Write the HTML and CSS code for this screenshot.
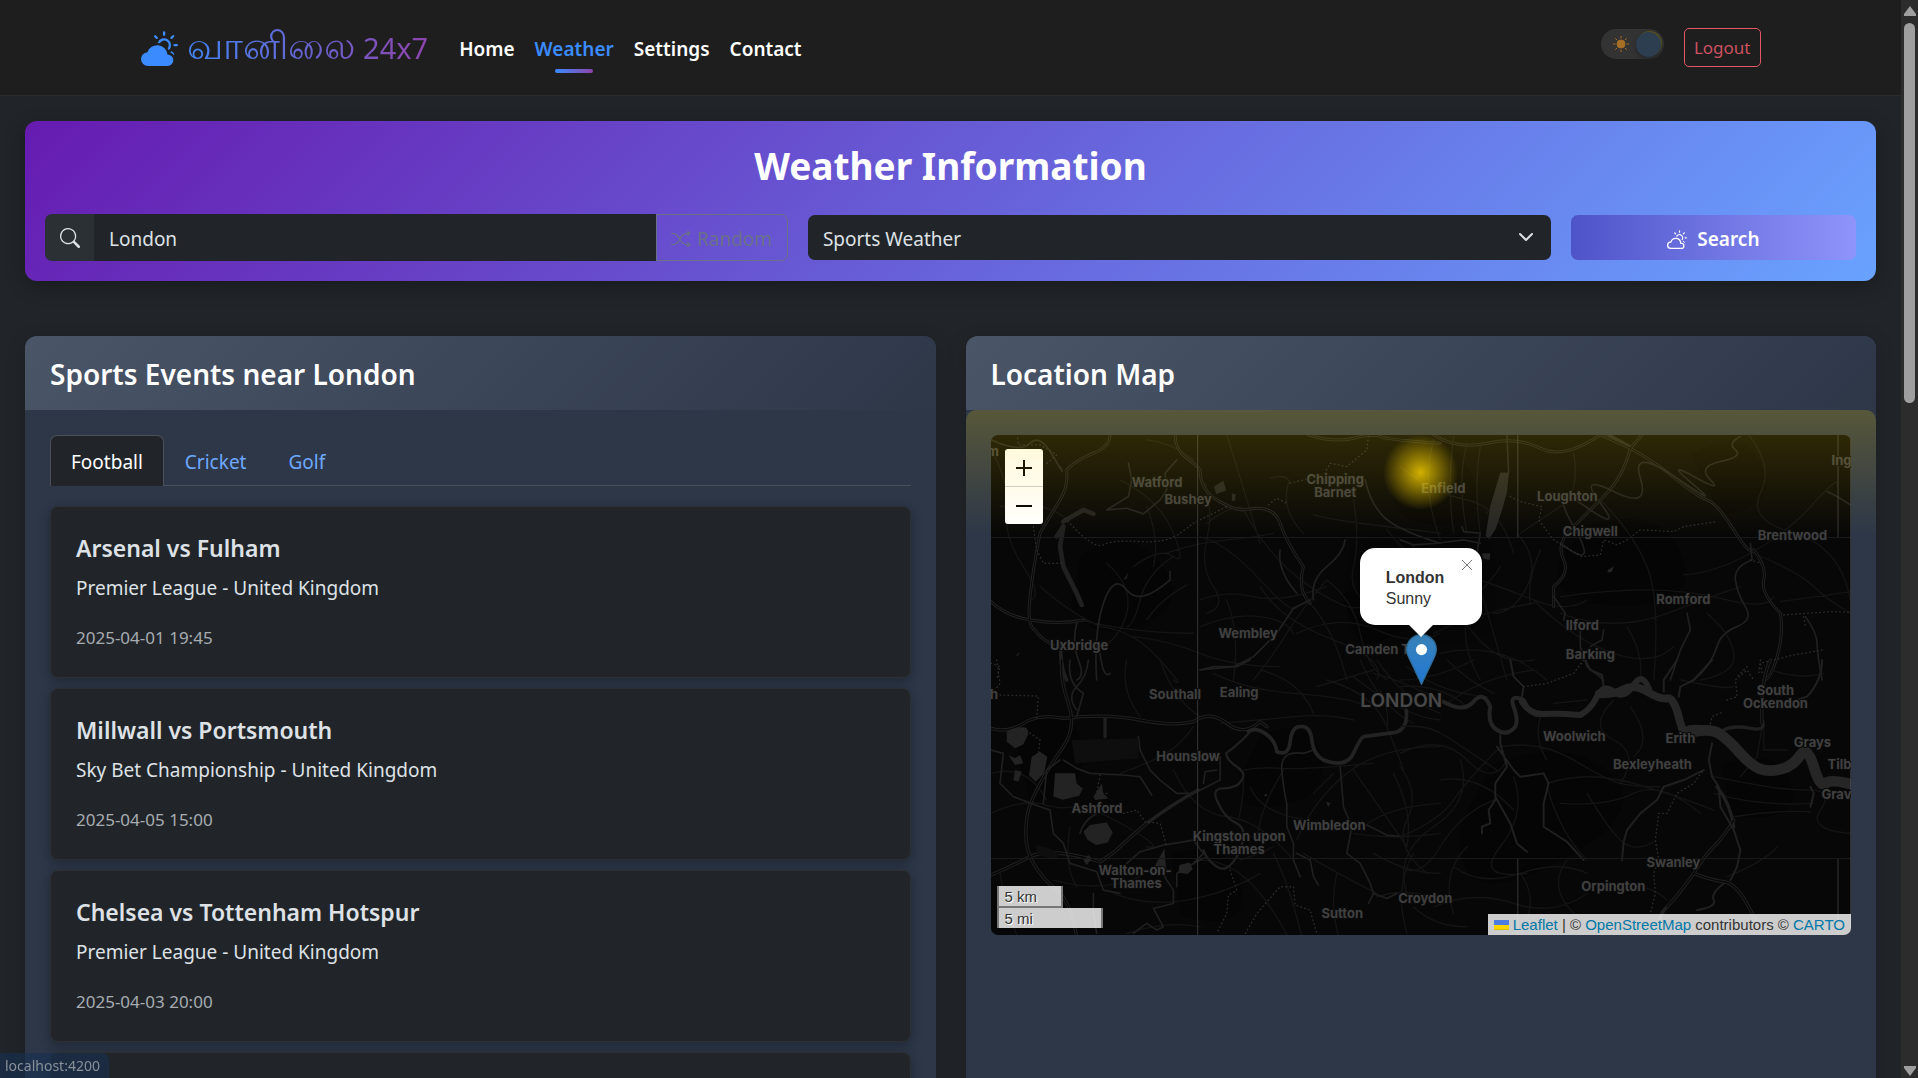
FILE: index.html
```html
<!DOCTYPE html>
<html lang="en">
<head>
<meta charset="utf-8">
<meta name="viewport" content="width=device-width, initial-scale=1">
<title>வானிலை 24x7</title>
<link rel="stylesheet" href="styles.css">
</head>
<body>
<header class="navbar">
  <div class="navbar-inner">
    <a class="brand" href="#">
      <svg class="brand-icon" viewBox="0 0 16 16" aria-hidden="true"><path d="M11.473 11a4.5 4.5 0 0 0-8.72-.99A3 3 0 0 0 3 16h8.5a2.5 2.5 0 0 0 0-5z"/><path d="M10.5 1.5a.5.5 0 0 0-1 0v1a.5.5 0 0 0 1 0zm3.743 1.964a.5.5 0 1 0-.707-.707l-.708.707a.5.5 0 0 0 .708.708zm-7.779-.707a.5.5 0 0 0-.707.707l.707.708a.5.5 0 1 0 .708-.708zm1.734 3.374a2 2 0 1 1 3.296 2.198q.3.423.516.898a3 3 0 1 0-4.84-3.225q.529.017 1.028.129m4.484 4.074c.6.215 1.125.59 1.522 1.072a.5.5 0 0 0 .039-.742l-.707-.707a.5.5 0 0 0-.854.377M14.5 6.5a.5.5 0 0 0 0 1h1a.5.5 0 0 0 0-1z"/></svg>
      <span class="brand-name"><span class="tamil" lang="ta">வானிலை</span> 24x7</span>
    </a>
    <nav class="nav">
      <a class="nav-link" href="#">Home</a>
      <a class="nav-link active" href="#">Weather</a>
      <a class="nav-link" href="#">Settings</a>
      <a class="nav-link" href="#">Contact</a>
    </nav>
    <div class="nav-actions">
      <label class="theme-toggle">
        <input class="visually-hidden" type="checkbox" checked aria-label="Dark theme">
        <svg class="sun" viewBox="0 0 16 16" aria-hidden="true"><circle cx="8" cy="8" r="4"/><path d="M8 0v2.500M8 13.500V16M0 8h2.500M13.500 8H16M2.300 2.300l1.800 1.800M11.900 11.900l1.800 1.800M13.700 2.300l-1.800 1.800M4.100 11.900l-1.800 1.800"/></svg>
        <span class="knob"></span>
      </label>
      <button class="logout" type="button">Logout</button>
    </div>
  </div>
</header>

<main class="page">
  <section class="banner">
    <h1 class="banner-title">Weather Information</h1>
    <form class="search-form">
      <div class="search-group">
        <label class="search-addon" for="city" aria-label="City">
          <svg class="icon" viewBox="0 0 16 16" aria-hidden="true"><path d="M11.742 10.344a6.5 6.5 0 1 0-1.397 1.398h-.001q.044.06.098.115l3.85 3.85a1 1 0 0 0 1.415-1.414l-3.85-3.85a1 1 0 0 0-.115-.1zM12 6.500a5.500 5.500 0 1 1-11 0 5.500 5.500 0 0 1 11 0"/></svg>
        </label>
        <input class="search-input" id="city" type="text" value="London">
        <button class="random" type="button" disabled>
          <svg class="icon" viewBox="0 0 16 16" aria-hidden="true"><path fill-rule="evenodd" d="M0 3.500A.5.5 0 0 1 .5 3H1c2.202 0 3.827 1.240 4.874 2.418.49.552.865 1.102 1.126 1.532.26-.43.636-.98 1.126-1.532C9.173 4.240 10.798 3 13 3v1c-1.798 0-3.173 1.010-4.126 2.082A9.600 9.600 0 0 0 7.556 8a9.600 9.600 0 0 0 1.317 1.918C9.828 10.990 11.204 12 13 12v1c-2.202 0-3.827-1.240-4.874-2.418A10.600 10.600 0 0 1 7 9.050c-.26.43-.636.98-1.126 1.532C4.827 11.760 3.202 13 1 13H.5a.5.5 0 0 1 0-1H1c1.798 0 3.173-1.010 4.126-2.082A9.600 9.600 0 0 0 6.444 8a9.600 9.600 0 0 0-1.317-1.918C4.172 5.010 2.796 4 1 4H.5a.5.5 0 0 1-.5-.5"/><path d="M13 5.466V1.534a.25.25 0 0 1 .41-.192l2.360 1.966c.12.1.12.284 0 .384l-2.360 1.966a.25.25 0 0 1-.41-.192m0 9v-3.932a.25.25 0 0 1 .41-.192l2.360 1.966c.12.1.12.284 0 .384l-2.360 1.966a.25.25 0 0 1-.41-.192"/></svg>
          Random
        </button>
      </div>
      <div class="select-wrap">
        <select class="select" aria-label="Weather type"><option>Sports Weather</option><option>Current Weather</option></select>
        <svg class="chevron" viewBox="0 0 16 16" aria-hidden="true"><path d="m2 5 6 6 6-6"/></svg>
      </div>
      <button class="search-button" type="submit">
        <svg class="icon" viewBox="0 0 16 16" aria-hidden="true"><path d="M7 8a3.500 3.500 0 0 1 3.500 3.555.5.5 0 0 0 .624.492A1.503 1.503 0 0 1 13 13.500a1.500 1.500 0 0 1-1.500 1.500H3a2 2 0 1 1 .1-3.998.5.5 0 0 0 .51-.375A3.500 3.500 0 0 1 7 8m4.473 3a4.500 4.500 0 0 0-8.720-.99A3 3 0 0 0 3 16h8.500a2.500 2.500 0 0 0 0-5z"/><path d="M10.5 1.5a.5.5 0 0 0-1 0v1a.5.5 0 0 0 1 0zm3.743 1.964a.5.5 0 1 0-.707-.707l-.708.707a.5.5 0 0 0 .708.708zm-7.779-.707a.5.5 0 0 0-.707.707l.707.708a.5.5 0 1 0 .708-.708zm1.734 3.374a2 2 0 1 1 3.296 2.198q.3.423.516.898a3 3 0 1 0-4.840-3.225q.529.017 1.028.129m4.484 4.074c.6.215 1.125.59 1.522 1.072a.5.5 0 0 0 .039-.742l-.707-.707a.5.5 0 0 0-.854.377M14.5 6.5a.5.5 0 0 0 0 1h1a.5.5 0 0 0 0-1z"/></svg>
        Search
      </button>
    </form>
  </section>

  <div class="columns">
    <section class="card">
      <h2 class="card-header">Sports Events near London</h2>
      <div class="card-body">
        <div class="tabs" role="tablist">
          <button class="tab selected" type="button" role="tab" aria-selected="true">Football</button>
          <button class="tab" type="button" role="tab" aria-selected="false">Cricket</button>
          <button class="tab" type="button" role="tab" aria-selected="false">Golf</button>
        </div>
        <div class="events">
          <article class="event"><h3 class="event-title">Arsenal vs Fulham</h3><p class="event-league">Premier League - United Kingdom</p><p class="event-date">2025-04-01 19:45</p></article>
          <article class="event"><h3 class="event-title">Millwall vs Portsmouth</h3><p class="event-league">Sky Bet Championship - United Kingdom</p><p class="event-date">2025-04-05 15:00</p></article>
          <article class="event"><h3 class="event-title">Chelsea vs Tottenham Hotspur</h3><p class="event-league">Premier League - United Kingdom</p><p class="event-date">2025-04-03 20:00</p></article>
          <article class="event"></article>
        </div>
      </div>
    </section>

    <section class="card">
      <h2 class="card-header">Location Map</h2>
      <div class="card-body">
        <div class="map">
          <svg class="tiles" viewBox="0 0 860 500" preserveAspectRatio="xMidYMid slice" role="img" aria-label="Map of London">
            <rect width="860" height="500" fill="#070707"/>
            <!-- parks and open land -->
            <g fill="#030303" opacity=".4">
              <path d="M90 120q50-30 80 10t-20 60-70-20zM420 10q40-20 60 30t-30 50-50-40zM600 90q70-20 90 30t-60 50-60-50zM270 300q50-20 60 20t-40 50-40-30zM500 330q80-30 120 10t-60 90-90-40zM20 290q60-30 70 20t-50 60zM700 20q50-30 70 10t-40 50zM180 420q60-20 70 30t-60 30zM730 330q60-20 70 20t-60 30zM350 160q40-20 60 10t-40 40z"/>
            </g>
            <!-- north-west -->
            <g transform="translate(-31 -35) scale(.3333)" fill="none" stroke-linecap="round" stroke-linejoin="round">
              <g stroke="#141414" stroke-width="4">
                <path d="M93 150Q150 250 140 330T190 500 210 600M480 240Q600 300 640 400T640 470 520 500M440 490Q520 560 500 640T400 760M560 120Q640 130 700 180M800 105Q870 330 900 430M735 250Q760 340 740 420T760 560 740 640M640 470Q560 520 540 600T500 680M620 460Q700 430 800 420T940 400M720 410Q800 430 900 540T1010 620M850 330Q930 480 1050 560T1200 620M985 250Q960 330 1030 400M1180 300Q1200 420 1180 500T1240 620M1060 345Q1120 360 1200 370T1440 400M1100 540Q1030 620 980 700T880 840M720 600Q800 570 880 590T1100 560M520 710Q620 720 720 760T960 800M420 680Q520 690 600 780T640 840M930 235Q980 220 990 250M720 680Q820 640 900 650T1000 700M1100 540Q1180 600 1200 700T1280 840M1040 600Q1120 680 1160 840M740 370Q820 310 850 325M360 660Q520 700 700 700M560 660Q600 600 680 555M1010 700Q1140 640 1250 690T1440 700M900 560Q960 660 1120 720T1250 840M1280 390Q1350 480 1360 440M800 600Q840 700 820 840M580 500Q600 420 560 320M240 560Q330 640 420 680M120 320Q240 300 310 350"/>
              </g>
              <g stroke="#222" stroke-width="9">
                <path d="M450 105Q450 140 400 160T320 210Q325 260 300 300T240 400Q220 500 210 590T225 690Q240 715 280 735"/>
                <path d="M645 105Q645 150 680 175T720 210Q720 270 770 300T850 330Q940 310 960 370T1030 500Q1010 570 1050 610"/>
                <path d="M1045 105Q1120 130 1180 115T1260 110T1440 130"/>
                <path d="M93 605Q140 650 220 662T370 660"/>
              </g>
              <g stroke="#070707" stroke-width="3">
                <path d="M450 105Q450 140 400 160T320 210Q325 260 300 300T240 400Q220 500 210 590T225 690Q240 715 280 735M645 105Q645 150 680 175T720 210Q720 270 770 300T850 330Q940 310 960 370T1030 500Q1010 570 1050 610M1045 105Q1120 130 1180 115T1260 110T1440 130M93 605Q140 650 220 662T370 660"/>
              </g>
              <g stroke="#202020" stroke-width="5">
                <path d="M93 120Q180 160 210 130T280 170 300 200M505 190L515 240 505 290 440 330 500 325 550 342 600 300 620 270 615 220 650 180M350 670Q335 730 355 780T350 840M420 760Q430 840 450 820M410 840Q400 700 430 610T500 570 630 540L630 515M720 810L820 800 880 770 950 700 1000 625 1050 600M1155 420Q1150 460 1100 500T1060 600M960 450Q950 510 1010 580M1215 240Q1230 310 1270 350T1440 430"/>
                <path d="M305 730Q295 790 320 840" stroke-width="11"/>
                <path d="M310 365L370 330 400 342M290 410L310 380 300 440 310 500 350 580 365 615" stroke-width="14"/>
              </g>
              <g stroke="#2c2c2c" stroke-width="4" stroke-dasharray="2 10">
                <path d="M173 115L175 135 240 135 290 165 255 195M220 380L230 450 250 490 310 490M315 355Q400 450 430 435T540 425 660 400 700 370 800 320M925 315L950 295 980 310M990 250L1090 225 1110 190 1160 200 1220 150 1225 105M93 790L120 800 110 840"/>
              </g>
              <path fill="#222" d="M762 260l28-18 8 30-30 10zM815 280l12 4-2 18-10 2zM490 540l14-22-4 18zM165 768l15-12-4 10z"/>
            </g>
            <!-- north-east -->
            <g transform="translate(409 -35) scale(.3333)" fill="none" stroke-linecap="round" stroke-linejoin="round">
              <g stroke="#141414" stroke-width="4">
                <path d="M100 120Q60 260 120 420M160 110Q140 260 160 400M200 130Q170 240 200 400M240 140Q220 260 240 400M520 160Q540 280 480 320T360 400M0 200Q100 280 200 300T340 460M350 400Q420 480 380 560T280 640M180 520Q300 560 400 600T560 600M480 590Q620 570 740 570T980 600 1120 590M600 300Q700 400 740 500T760 840M480 640Q640 700 800 640T1020 560M850 525Q940 520 1050 460T1240 310 1310 260M1045 105Q1120 200 1080 280T1180 400 1350 600M1060 460Q1200 520 1240 560T1350 640M1140 605L1350 575M400 600Q520 720 640 760T820 740M130 450Q220 500 250 600T320 840M20 560Q140 600 220 700T400 780M100 700Q220 640 400 610M920 640Q990 700 1000 760T900 840M680 680Q730 760 720 840M200 640Q180 740 240 840M420 450Q380 540 390 610M300 500Q240 600 120 640M0 480Q120 490 220 560M120 760Q300 720 440 840"/>
              </g>
              <g stroke="#222" stroke-width="9">
                <path d="M100 105Q170 150 260 130T420 145T600 105L690 145Q670 230 610 290T500 400Q470 440 490 480T460 560V620"/>
                <path d="M725 105L690 145Q770 190 830 240T920 300 1000 390 1060 450Q1100 500 1090 540T1140 640Q1150 700 1130 770T1090 840"/>
                <path d="M625 105L690 140"/>
              </g>
              <g stroke="#070707" stroke-width="3">
                <path d="M100 105Q170 150 260 130T420 145T600 105L690 145Q670 230 610 290T500 400Q470 440 490 480T460 560V620M725 105L690 145Q770 190 830 240T920 300 1000 390 1060 450Q1100 500 1090 540T1140 640Q1150 700 1130 770T1090 840"/>
              </g>
              <g stroke="#202020" stroke-width="5">
                <path d="M1020 110Q980 130 1005 150T960 185 930 240 880 230 880 255 830 235 720 235 640 275 600 310 555 320 520 380 480 430M320 105L325 220 300 250M0 420L40 435 110 430 190 420 240 430M185 380L190 395 240 400 230 460M1050 430L1055 480Q1000 500 1005 540T1035 620 1010 680 950 740Q930 800 880 840M860 640L870 690 840 750 810 840M1280 275L1310 290 1350 315M1215 650Q1250 700 1250 730T1265 840M460 590L495 640 490 660M540 690L540 740 560 800 610 840M610 690L605 720 570 740"/>
              </g>
              <path fill="#252525" stroke="none" d="M300 218h26l-6 60-14 50-20 60-20 30-10-10 14-90zM245 460l25 0-2 20-20-4zM622 510l18-10-6 16-12 2zM256 330l6 12-4-2z"/>
              <g stroke="#2c2c2c" stroke-width="4" stroke-dasharray="2 10">
                <path d="M330 290L360 305 425 320 415 360 460 420 545 470 600 465 610 420 650 435 680 420 720 390 820 395 850 380 950 365M1050 480L1080 490M1150 645L1290 635 1350 637M1210 650L1215 680M1265 750L1180 765 1120 780 1080 790 1085 820M1040 800L1010 830"/>
              </g>
            </g>
            <!-- south-west -->
            <g transform="translate(-31 225) scale(.3333)" fill="none" stroke-linecap="round" stroke-linejoin="round">
              <g stroke="#141414" stroke-width="4">
                <path d="M500 0Q480 90 540 170M600 0Q640 120 720 170M760 40Q860 90 1000 100T1200 130M900 30Q1020 60 1060 160M1100 60Q1240 100 1280 200T1330 330M1070 80L1240 30M1200 0Q1260 140 1360 190M780 190Q900 180 1000 170T1180 180M720 600Q820 600 900 700T1010 900M850 330Q900 320 960 325T1240 310M850 360Q850 420 835 480M890 540Q900 440 970 330M1010 540Q1060 420 1160 340T1440 260M1180 330L1340 560M1210 500Q1280 440 1440 430M1240 580Q1340 640 1440 640M1180 520Q1300 540 1440 520M1030 580Q1130 640 1250 700M700 200Q660 260 600 290T480 340M940 580Q1000 700 1040 900M640 330Q700 460 800 470T1000 600M840 600Q900 580 940 560M460 700Q560 740 680 720T900 640M500 820Q620 780 720 800M240 430Q300 450 340 440T500 500 560 560M280 660Q420 700 540 650M330 500Q310 620 350 680M93 340Q200 310 260 420M120 640Q140 760 200 900M1360 580Q1300 680 1340 820M1250 710Q1340 680 1440 720M1130 640Q1100 760 1160 900M1300 340Q1360 460 1340 560M1060 400L1120 340M1240 40Q1320 60 1440 120M1250 0Q1330 120 1440 160M1180 50Q1330 170 1440 180M1260 90Q1290 160 1280 200M870 380Q900 460 1040 480M93 460Q180 420 240 430"/>
              </g>
              <g stroke="#202020" stroke-width="10">
                <path d="M93 205Q140 220 190 190T310 175Q440 160 540 180T700 185Q750 150 800 190T900 185L920 200M305 0Q300 60 325 130T310 260Q260 330 230 390T200 480Q190 560 220 610T290 690 350 830M93 645Q150 620 210 590T420 605Q460 580 480 560T560 490M435 170V230M560 490Q640 430 715 390"/>
              </g>
              <g stroke="#070707" stroke-width="4">
                <path d="M93 205Q140 220 190 190T310 175Q440 160 540 180T700 185Q750 150 800 190T900 185L920 200M305 0Q300 60 325 130T310 260Q260 330 230 390T200 480Q190 560 220 610T290 690 350 830M93 645Q150 620 210 590T420 605Q460 580 480 560T560 490"/>
              </g>
              <g stroke="#1f1f1f" stroke-width="5">
                <path d="M385 0Q380 50 350 80T350 150M330 0Q320 70 370 100L350 170M310 300L350 325 390 340 490 345 540 350 575 405M535 230L540 270 570 330 600 360 650 400 700 400 780 360 780 290M93 270L130 280 120 370 160 410 240 440 270 450 280 520 310 550 330 610 410 635 430 690 480 700M250 430L260 330 300 300M730 370L735 335 770 330M500 610L540 575 610 555 700 540 730 580 700 610M600 620L620 660 640 690 640 730 580 745 610 800 590 810 560 790 520 820M360 520Q370 480 410 460M720 30L760 20 830 20 870 0M650 680V640L700 610 740 590M980 430Q970 390 965 330T1030 280L1060 270M980 430L980 500 1000 550 1000 600 1020 650M1010 580L1050 600 1060 650 1075 675M1140 320L1150 440 1175 500 1160 580 1200 610 1230 670 1240 700 1225 730M1240 700L1280 715 1310 700M1220 495L1280 525 1330 530M400 700L400 760 410 820"/>
                <path stroke-width="7" d="M798 280Q800 300 830 320T845 360Q830 385 790 385T775 430Q790 470 830 490T830 590Q800 640 770 620T730 570M798 280Q850 240 865 220"/>
                <path stroke="#232323" stroke-width="11" d="M865 215Q885 200 915 220T950 275Q985 290 990 245T1020 200Q1050 195 1055 240T1090 300Q1160 325 1180 280T1210 230L1300 218Q1345 210 1338 150"/>
              </g>
              <g fill="#232323">
                <path d="M140 215q25-18 60-12l5 20-15 30-25 12-25-20zM215 290l25-15 22 15-10 50-25 25-20-20zM285 340h60l5 30 18 15-10 22-50 12-28-10zM370 515l20-20 50-8 18 30-15 30-35 8-25-15zM583 620l30-55 5 60-30 5zM658 615l30-8 10 20-15 15-28-4zM145 285l20 10 15-10 10 25-25 5zM165 330l20 5-10 30-15-5zM400 410l25-40 5 30 15 15-40 5zM370 600l15-15 10 10-15 20zM910 405l12-4-4 10zM1098 425l14 4-8 12z"/>
                <path d="M335 240l200-5v60l-190 15zM230 555l40 10 30 20-20 15-50-20z" fill="#0e0e0e"/>
              </g>
              <g stroke="#2c2c2c" stroke-width="4" stroke-dasharray="2 10">
                <path d="M110 0L120 70 105 90M120 105L235 108 230 175M190 205L240 240 235 280M420 345L410 400 450 400M490 460L530 450 555 485 600 490 620 560M810 630L830 690 805 705 800 760 770 820M850 830L890 760 960 680H1000L1005 735 1050 750 1070 820"/>
              </g>
            </g>
            <!-- south-east -->
            <g transform="translate(409 225) scale(.3333)" fill="none" stroke-linecap="round" stroke-linejoin="round">
              <g stroke="#141414" stroke-width="4">
                <path d="M0 60Q100 60 220 0M0 80Q120 70 200 140M140 130Q250 50 400 30M20 20Q120 100 260 110M280 100Q200 60 140 0M0 280Q120 220 200 300T320 300M0 200Q80 190 140 230T290 330M0 320Q60 400 20 480T80 640M0 530Q120 480 160 420T300 260M180 300Q220 420 100 500T20 700M280 420Q180 460 120 560T0 620M340 350Q380 460 300 560T380 640M300 260Q420 240 520 300T660 370 780 380M440 370Q560 330 700 370T940 450M480 430Q620 440 700 400T900 460M440 380Q480 520 560 600M560 400Q620 500 660 540T760 545M640 120Q560 200 640 240T660 370M690 140Q760 240 700 290M420 170Q400 240 440 300M460 130L560 120M500 600Q440 680 520 760M160 620Q240 680 360 640T560 640M100 740Q220 690 340 730T560 700M360 640Q420 720 360 820M200 560Q120 640 160 760M940 350Q1040 370 1100 380T1230 390 1260 450 1350 520M1000 470Q1120 450 1230 455M940 400Q1080 440 1240 430M1085 200L1070 290 1020 350M1090 200L1090 270H1160M840 60Q980 90 1000 80M1110 30Q1200 60 1270 40M800 720Q760 680 700 680M980 650Q1100 600 1130 560M120 360Q240 340 340 450M40 740Q100 800 200 800"/>
              </g>
              <g stroke="#202020" stroke-width="10">
                <path d="M1110 0Q1080 60 1085 190M970 210Q1000 195 1050 205T1085 180M1000 480Q970 530 940 560T880 640Q830 710 800 740T780 800M880 640Q930 660 970 665T1050 750 1100 820M950 380Q990 430 1000 500"/>
              </g>
              <g stroke="#070707" stroke-width="4">
                <path d="M1110 0Q1080 60 1085 190M1000 480Q970 530 940 560T880 640Q830 710 800 740M880 640Q930 660 970 665T1050 750 1100 820"/>
              </g>
              <g stroke="#202020" stroke-width="6">
                <path d="M300 225L300 250 320 320 285 370 285 420 265 450 270 490 245 500V520M290 260L340 330 360 350 430 340 445 370 430 430 430 500 500 545 550 600M285 410L330 490 350 550 380 575M330 0L340 50 370 80 365 110M555 0L570 30 605 45 612 95M790 95L790 60 830 0M835 110L840 80 880 60 935 0M935 250L925 300 935 350 955 380 960 440 1000 510 1020 570 1010 620 990 660M910 330L850 360 790 380 770 420 720 460 680 510 670 545 665 600M970 670Q930 700 940 720T890 750M1265 0Q1265 60 1220 110L1130 140M1230 380L1240 400 1230 440"/>
              </g>
              <path stroke="#242424" stroke-width="12" d="M130 125Q190 160 220 125T270 140Q260 190 290 210T345 200Q355 180 340 140T370 120Q390 160 410 165"/>
              <path stroke="#262626" stroke-width="18" d="M365 125Q390 165 430 162T540 165Q570 150 590 110T640 95 700 75 750 100"/>
              <path stroke="#262626" stroke-width="24" d="M595 102Q640 105 670 88T740 95 800 115 835 170 855 215 930 210"/>
              <path stroke="#262626" stroke-width="32" d="M880 215Q930 205 955 220T1020 280 1090 330 1150 325 1200 285 1240 320 1275 370 1360 375"/>
              <g stroke="#2c2c2c" stroke-width="4" stroke-dasharray="2 10">
                <path d="M370 80L440 70 520 40 550 0M930 190L935 170 970 155M980 120L1010 110 1005 60 1040 30 1060 60M1080 0L1075 40M905 335L880 370 830 400 800 460H775L765 540 775 600 760 640 765 700 750 760"/>
              </g>
            </g>
            <!-- tile seams -->
            <path d="M206.500 0V500M526.500 0V102M526.500 423V500M846.500 0V102M846.500 423V500" stroke="#353535" fill="none"/>
            <path d="M0 102.500H860M0 423.500H860" stroke="#191919" fill="none"/>
            <path d="M859.500 0V500" stroke="#5c5c5c" fill="none"/>
            <g class="places">
              <text x="166" y="52">Watford</text><text x="197" y="69">Bushey</text><text x="344" y="49">Chipping</text><text x="344" y="62">Barnet</text>
              <text x="452" y="58">Enfield</text><text x="576" y="66">Loughton</text><text x="599" y="101">Chigwell</text><text x="801" y="105">Brentwood</text>
              <text x="840" y="30" class="from">Ing</text><text x="692" y="169">Romford</text><text x="591" y="195">Ilford</text><text x="599" y="224">Barking</text>
              <text x="257" y="203">Wembley</text><text x="88" y="215">Uxbridge</text><text x="354" y="219" class="from">Camden T</text><text x="2" y="21">m</text><text x="3" y="264">h</text>
              <text x="184" y="264">Southall</text><text x="248" y="262">Ealing</text><text x="410" y="272" class="city">LONDON</text><text x="197" y="326">Hounslow</text>
              <text x="106" y="378">Ashford</text><text x="248" y="406">Kingston upon</text><text x="248" y="419">Thames</text><text x="338" y="395">Wimbledon</text>
              <text x="144" y="440">Walton-on-</text><text x="145" y="453">Thames</text><text x="351" y="483">Sutton</text><text x="434" y="468">Croydon</text>
              <text x="583" y="306">Woolwich</text><text x="689" y="308">Erith</text><text x="661" y="334">Bexleyheath</text><text x="784" y="260">South</text><text x="784" y="273">Ockendon</text>
              <text x="821" y="312">Grays</text><text x="836" y="334" class="from">Tilb</text><text x="830" y="364" class="from">Grav</text><text x="682" y="432">Swanley</text><text x="622" y="456">Orpington</text>
            </g>
          </svg>

          <svg class="marker" viewBox="0 0 25 41" aria-hidden="true">
            <defs><linearGradient id="pin" x2="0" y2="1"><stop stop-color="#3a82b8"/><stop offset="1" stop-color="#2077d4"/></linearGradient></defs>
            <path d="M12.500.5C5.900.5.5 5.700.5 12.400c0 3 1.100 5.300 2.100 7.300L12.500 40.500l9.900-20.800c1-2 2.100-4.300 2.100-7.300C24.500 5.700 19.100.5 12.500.5z" fill="url(#pin)" stroke="#2e6c97"/>
            <circle cx="12.500" cy="12.500" r="4.500" fill="#fff"/>
          </svg>
          <div class="popup">
            <strong>London</strong><span>Sunny</span>
            <button class="popup-close" type="button" aria-label="Close popup"><svg viewBox="0 0 10 10" aria-hidden="true"><path d="m0 0 10 10M10 0 0 10"/></svg></button>
          </div>

          <div class="zoom-control">
            <button class="zoom-button" type="button" aria-label="Zoom in"><svg viewBox="0 0 16 16" aria-hidden="true"><path d="M0 8h16M8 0v16"/></svg></button>
            <button class="zoom-button" type="button" aria-label="Zoom out"><svg viewBox="0 0 16 16" aria-hidden="true"><path d="M0 8h16"/></svg></button>
          </div>
          <div class="scale">
            <div class="scale-line km">5 km</div>
            <div class="scale-line mi">5 mi</div>
          </div>
          <div class="attribution"><a href="#"><svg class="flag" viewBox="0 0 15 10" aria-hidden="true"><path fill="#4c7be1" d="M0 0h15v5H0z"/><path fill="#ffd500" d="M0 5h15v4H0z"/><path fill="#e0bc00" d="M0 9h15v1H0z"/></svg> Leaflet</a> | © <a href="#">OpenStreetMap</a> contributors © <a href="#">CARTO</a></div>
        </div>
        <div class="sunny-overlay"><span class="sun-glow"></span></div>
      </div>
    </section>
  </div>
</main>

<div class="status">localhost:4200</div>
<div class="scrollbar" aria-hidden="true">
  <svg class="arrow" viewBox="0 0 12 10"><path d="M6 0 12 8v2H0V8z"/></svg>
  <div class="thumb"></div>
  <svg class="arrow down" viewBox="0 0 12 10"><path d="M6 10 12 2V0H0v2z"/></svg>
</div>
</body>
</html>
```
FILE: styles.css
```css
* { box-sizing: border-box; }

body {
  margin: 0;
  height: 100vh;
  padding-right: 17px;
  overflow: hidden;
  background: #212529;
  color: #dee2e6;
  font: 19px/30px "Noto Sans", "Open Sans", sans-serif;
}

h1, h2, h3, p { margin: 0; }
a { text-decoration: none; }
button, input, select { font: inherit; color: inherit; }
button { cursor: pointer; }

.visually-hidden { position: absolute; opacity: 0; width: 1px; height: 1px; margin: 0; }
.icon { width: 20px; height: 20px; fill: currentColor; flex: none; }

/* Top bar */
.navbar { background: #1e1e1e; border-bottom: 1px solid #2b2b2b; }
.navbar-inner { display: flex; align-items: center; max-width: 1650px; height: 95px; margin: 0 auto; padding: 0 15px; }
.brand { display: flex; align-items: center; gap: 9px; margin-right: 21px; }
.brand-icon { width: 37px; height: 37px; fill: #3b8bff; }
.brand-name {
  font-size: 29px;
  line-height: 45px;
  white-space: nowrap;
  color: transparent;
  background: linear-gradient(90deg, #4285f4, #8e44ad);
  background-clip: text;
  -webkit-background-clip: text;
}
.tamil { font-size: 38px; line-height: 30px; font-weight: 500; }
.nav { display: flex; }
.nav-link { position: relative; padding: 11px 10px 9px; color: #fff; font-weight: 600; }
.nav-link.active { color: #3b8bff; }
.nav-link.active::after {
  content: "";
  position: absolute;
  left: 50%;
  bottom: 0;
  width: 38px;
  height: 4px;
  margin-left: -19px;
  border-radius: 2px;
  background: linear-gradient(90deg, #3b8bff, #8e44ad);
}
.nav-actions { display: flex; align-items: center; gap: 20px; margin-left: auto; }
.theme-toggle { position: relative; display: flex; align-items: center; width: 63px; height: 30px; margin-bottom: 8px; padding-left: 12px; border-radius: 15px; background: #333; overflow: hidden; }
.sun { width: 16px; height: 16px; fill: #a56f25; stroke: #a56f25; stroke-width: 1; }
.knob { position: absolute; right: 3px; top: 3px; width: 25px; height: 25px; border-radius: 50%; background: #2c3e50; box-shadow: 0 2px 5px rgba(0,0,0,.3), 1px -1px 0 #5c551f; }
.logout { height: 39px; padding: 0 9px; border: 1px solid #e35665; border-radius: 5px; background: none; color: #cd5160; font-size: 17px; line-height: 26px; }

/* Search banner */
.page { padding: 25px; }
.banner { padding: 20px; border-radius: 12px; background: linear-gradient(135deg, #661bb0, #69a2ff); box-shadow: 0 5px 19px rgba(0,0,0,.3); }
.banner-title { margin-bottom: 23px; color: #fff; font-size: 37px; line-height: 50px; font-weight: 700; text-align: center; }
.search-form { display: grid; grid-template-columns: repeat(12, 1fr); gap: 20px; align-items: center; }
.search-group { grid-column: span 5; display: flex; height: 47px; }
.search-addon { display: flex; align-items: center; justify-content: center; width: 49px; border-radius: 7px 0 0 7px; background: #2b3035; }
.search-input { flex: 1; min-width: 0; padding: 2px 15px 0; border: 0; background: #212529; color: #dee2e6; }
.random { display: flex; align-items: center; gap: 6px; width: 132px; padding: 2px 14px 0; border: 1px solid #6c757d; border-radius: 0 7px 7px 0; background: none; color: #6c757d; opacity: .9; }
.select-wrap { grid-column: span 5; position: relative; display: flex; }
.select { width: 100%; height: 45px; padding: 2px 15px 0; border: 0; border-radius: 7px; background: #212529; appearance: none; }
.chevron { position: absolute; right: 17px; top: 14px; width: 16px; height: 16px; fill: none; stroke: #dee2e6; stroke-width: 2; stroke-linecap: round; stroke-linejoin: round; pointer-events: none; }
.search-button { grid-column: span 2; display: flex; align-items: center; justify-content: center; gap: 10px; height: 45px; padding: 2px 0 0; border: 0; border-radius: 7px; background: linear-gradient(90deg, #4e54c8, #8f94fb); color: #fff; font-weight: 600; }

/* Cards */
.columns { display: grid; grid-template-columns: 1fr 1fr; gap: 30px; margin-top: 55px; }
.card { min-width: 0; border-radius: 12px; background: #2d3748; box-shadow: 0 5px 19px rgba(0,0,0,.2); }
.card-header { padding: 21px 25px 19px; border-radius: 12px 12px 0 0; background: linear-gradient(135deg, #4a5568, #2d3748); color: #fff; font-size: 28px; line-height: 34px; font-weight: 600; }
.card-body { position: relative; padding: 25px; }

.tabs { display: flex; border-bottom: 1px solid #495057; margin-bottom: 20px; }
.tab { margin-bottom: -1px; padding: 11px 20px 9px; border: 1px solid transparent; border-bottom: 0; border-radius: 7px 7px 0 0; background: none; color: #6ea8fe; }
.tab.selected { border-color: #495057; background: #212529; color: #fff; }

.events { display: grid; gap: 10px; }
.event { min-height: 172px; padding: 26px 25px 24px; border: 1px solid #2d3033; border-radius: 8px; background: #212529; box-shadow: 0 3px 12px rgba(0,0,0,.3); }
.event-title { margin-bottom: 10px; font-size: 23px; line-height: 30px; font-weight: 600; }
.event-league { margin-bottom: 20px; }
.event-date { color: #a7acb1; font-size: 17px; }

/* Map */
.map { position: relative; height: 500px; border-radius: 7px; overflow: hidden; font: 15px/21px "Liberation Sans", Arial, sans-serif; color: #333; }
.tiles { display: block; width: 100%; height: 100%; }
.places text { fill: #404040; stroke: #0b0b0b; stroke-width: 2px; paint-order: stroke; font: 700 13px Inter, sans-serif; text-anchor: middle; }
.places .from { text-anchor: start; }
.places .city { font-size: 19px; font-weight: 600; fill: #484848; }
.marker { position: absolute; left: 50%; top: 199px; width: 31px; height: 51px; margin-left: -15px; }
.popup { position: absolute; left: 50%; top: 113px; width: 122px; height: 77px; margin-left: -61px; padding: 19px 26px; border-radius: 15px; background: #fff; font-size: 16px; box-shadow: 0 3px 14px rgba(0,0,0,.4); }
.popup strong, .popup span { display: block; }
.popup::after { content: ""; position: absolute; left: 50%; top: 100%; margin-left: -12px; border: 12px solid transparent; border-top-color: #fff; border-bottom: 0; }
.popup-close { position: absolute; right: 10px; top: 12px; display: flex; width: 10px; height: 10px; padding: 0; border: 0; background: none; }
.popup-close svg { width: 10px; height: 10px; stroke: #757575; stroke-width: 1; overflow: visible; }
.zoom-control { position: absolute; left: 14px; top: 14px; width: 38px; border-radius: 3px; background: #fff; overflow: hidden; }
.zoom-button { display: flex; align-items: center; justify-content: center; width: 38px; height: 37px; padding: 0; border: 0; background: none; }
.zoom-button + .zoom-button { height: 38px; border-top: 1px solid #ccc; }
.zoom-button svg { width: 16px; height: 16px; stroke: #000; stroke-width: 2; }
.scale { position: absolute; left: 6px; bottom: 7px; }
.scale-line { height: 22px; padding: 0 6px; border: 2px solid #777; border-top: 0; background: rgba(255,255,255,.8); line-height: 21px; text-shadow: 1px 1px #fff; }
.km { width: 66px; }
.mi { width: 106px; height: 20px; border-bottom: 0; }
.attribution { position: absolute; right: 0; bottom: 0; padding: 0 6px; background: rgba(255,255,255,.8); white-space: nowrap; }
.attribution a { color: #0078a8; }
.flag { width: 15px; height: 10px; }

.sunny-overlay { position: absolute; inset: 0 0 auto; height: 125px; border-radius: 10px 10px 0 0; background: linear-gradient(rgba(255,215,0,.2), rgba(255,215,0,0)); pointer-events: none; }
.sun-glow { position: absolute; left: 50%; top: 25px; width: 75px; height: 75px; margin-left: -38px; border-radius: 50%; background: radial-gradient(closest-side, rgba(255,215,0,.8), rgba(255,215,0,0)); }

/* Browser status text and scrollbar */
.status { position: fixed; left: 0; bottom: 0; padding: 0 9px 0 5px; border-radius: 0 7px 0 0; background: rgba(22,49,84,.6); color: #8a9199; font-size: 14px; line-height: 25px; }
.scrollbar { position: fixed; right: 0; top: 0; bottom: 0; display: flex; flex-direction: column; align-items: center; gap: 7px; width: 17px; padding: 6px 0 2px; background: #2c2c2c; }
.arrow { width: 12px; height: 10px; fill: #9f9f9f; }
.arrow.down { margin-top: auto; }
.thumb { width: 11px; height: 35.500%; border-radius: 6px; background: #9f9f9f; }
```
